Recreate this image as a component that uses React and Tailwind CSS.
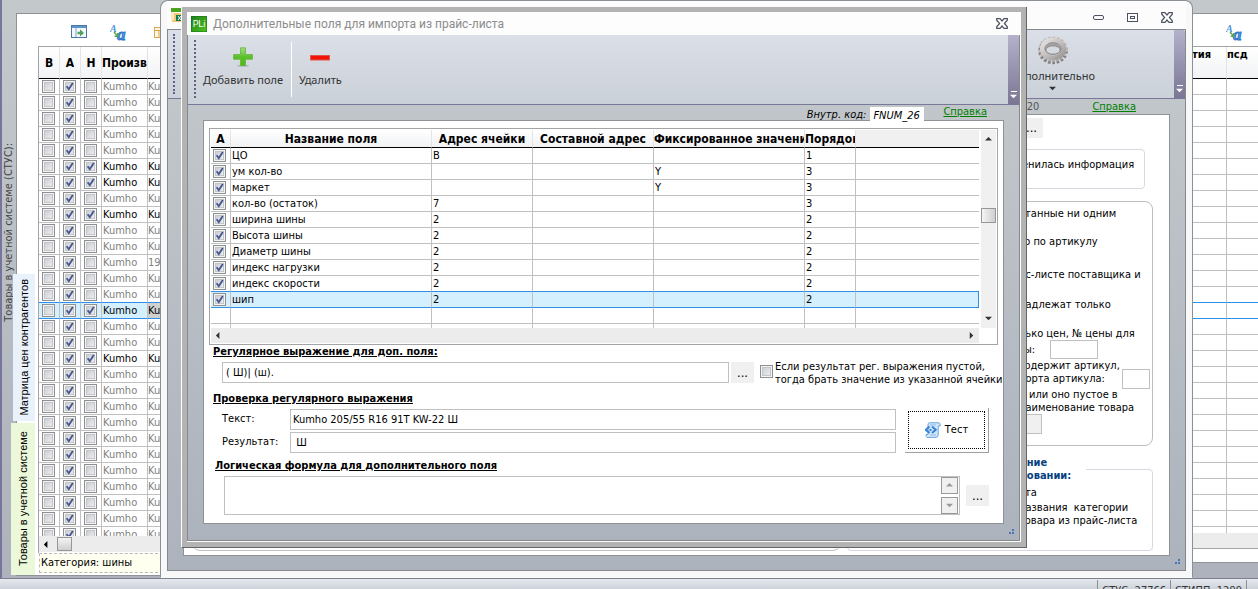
import React, { useState } from "react";
import clsx from "clsx";

const stockRows = Array.from({ length: 29 }, (_, i) => ({
    id: i,
    isNew: [5, 6, 8, 14, 17].includes(i),
    selected: i === 14,
    brand: "Kumho",
    name: i === 11 ? "19" : "Ku",
}));

const fieldRows = [
    { name: "ЦО", cell: "B", fixed: "", order: "1" },
    { name: "ум кол-во", cell: "", fixed: "Y", order: "3" },
    { name: "маркет", cell: "", fixed: "Y", order: "3" },
    { name: "кол-во (остаток)", cell: "7", fixed: "", order: "3" },
    { name: "ширина шины", cell: "2", fixed: "", order: "2" },
    { name: "Высота шины", cell: "2", fixed: "", order: "2" },
    { name: "Диаметр шины", cell: "2", fixed: "", order: "2" },
    { name: "индекс нагрузки", cell: "2", fixed: "", order: "2" },
    { name: "индекс скорости", cell: "2", fixed: "", order: "2" },
    { name: "шип", cell: "2", fixed: "", order: "2" },
];

const Checkbox = ({ id, label, checked = false }) => {
    const [value, setValue] = useState(checked);

    return (
        <span className="relative block size-[13px] shrink-0">
            <input
                id={id}
                type="checkbox"
                aria-label={label}
                checked={value}
                onChange={() => setValue(!value)}
                className="block size-[13px] appearance-none border border-[#8e8f8f] bg-linear-to-br from-[#c4c8d0] to-[#f4f4f4] shadow-[inset_0_0_0_1px_#f4f4f4,inset_0_0_0_2px_#c2c5ca]"
            />
            {value && (
                <svg viewBox="0 0 13 13" className="pointer-events-none absolute inset-0 size-[13px]">
                    <path d="M3.6 6.2 L5.8 9.2 L9.8 3" fill="none" stroke="#44598f" strokeWidth="1.9" />
                </svg>
            )}
        </span>
    );
};

const Triangle = ({ dir, className }) => {
    const points = {
        up: "0,5 8,5 4,1",
        down: "0,2 8,2 4,6",
        left: "5,0 5,8 1,4",
        right: "2,0 2,8 6,4",
    };
    return (
        <svg viewBox="0 0 8 8" className={clsx("size-[7px]", className)} fill="currentColor">
            <polygon points={points[dir]} />
        </svg>
    );
};

const CloseIcon = () => (
    <svg viewBox="0 0 12 11" className="h-[11px] w-3">
        <path
            d="M.7 .7 H4 L6 3 L8 .7 H11.3 V2.2 L8.4 5.5 L11.3 8.8 V10.3 H8 L6 8 L4 10.3 H.7 V8.8 L3.6 5.5 L.7 2.2 Z"
            fill="#fff"
            stroke="#4d5262"
            strokeWidth="1.2"
        />
    </svg>
);

const LettersIcon = () => (
    <svg viewBox="0 0 17 17" className="size-[17px]" fontFamily="Liberation Serif, serif" fontStyle="italic" fontWeight="bold">
        <text x="0" y="8" fontSize="10" fill="#4d93dd">A</text>
        <text x="7" y="16" fontSize="17" fill="#4b95e6" stroke="#2f74cb" strokeWidth=".9">a</text>
        <path d="M4 8 L7.5 12 M7.8 9 V12.3 H4.6" stroke="#5aa552" strokeWidth="1.5" fill="none" />
    </svg>
);

const ExportIcon = () => (
    <svg viewBox="0 0 16 14" className="h-[14px] w-4">
        <rect x=".5" y=".5" width="15" height="12" fill="#f4f8fd" stroke="#4879a8" />
        <rect x="1" y="1" width="14" height="2" fill="#5c93c9" />
        <path d="M5 3 V12" stroke="#7ea4c8" />
        <path d="M6.5 6.8 H9 V4.3 L13 8 L9 11.5 V9.2 H6.5 Z" fill="#4fa35a" />
    </svg>
);

const TableIcon = () => (
    <svg viewBox="0 0 10 11" className="h-[11px] w-[10px]">
        <rect x=".5" y=".5" width="13" height="10" fill="#fff7df" stroke="#dba650" />
        <path d="M1 3.5 H14 M5 3 V11" stroke="#dba650" />
    </svg>
);

const PliIcon = () => (
    <svg viewBox="0 0 16 16" className="size-4">
        <defs>
            <linearGradient id="pli" x1="0" y1="0" x2="1" y2="1">
                <stop offset="0" stopColor="#1c7f1c" />
                <stop offset="1" stopColor="#4fc41c" />
            </linearGradient>
        </defs>
        <rect width="16" height="16" fill="url(#pli)" stroke="#13701a" />
        <text x="8" y="11" fontSize="9" fill="#fff" fontFamily="Roboto, sans-serif" textAnchor="middle">PLi</text>
    </svg>
);

const PriceIcon = () => (
    <svg viewBox="0 0 16 16" className="size-4">
        <rect x="0" y="1" width="14" height="4" fill="#4aa51e" />
        <rect x="1" y="6" width="12" height="9" fill="#f5c878" />
        <rect x="0" y="5" width="3" height="8" fill="#fae8c4" />
        <rect x="5" y="8" width="9" height="6" fill="#17784a" />
        <path d="M7 9 L10 13 M10 9 L7 13" stroke="#fff" />
    </svg>
);

const PlusIcon = () => (
    <svg viewBox="0 0 20 20" className="size-5">
        <defs>
            <linearGradient id="plus" x1="0" y1="0" x2="0" y2="1">
                <stop offset="0" stopColor="#a0dc80" />
                <stop offset=".5" stopColor="#5cc02c" />
                <stop offset="1" stopColor="#4fb80f" />
            </linearGradient>
        </defs>
        <ellipse cx="10" cy="18.8" rx="6" ry="1" fill="#aeb6bd" />
        <path d="M7.5 .8 H12.5 V7.5 H19.4 V12.3 H12.5 V18.6 H7.5 V12.3 H.6 V7.5 H7.5 Z" fill="url(#plus)" stroke="#62b53c" strokeWidth=".8" />
    </svg>
);

const MinusIcon = () => (
    <svg viewBox="0 0 20 20" className="size-5">
        <rect x=".5" y="8.5" width="19" height="4.5" fill="#f01505" stroke="#e0564c" />
    </svg>
);

const GearIcon = () => (
    <svg viewBox="0 0 32 32" className="size-8">
        <defs>
            <linearGradient id="gear" x1="0" y1="0" x2="1" y2="1">
                <stop offset="0" stopColor="#e6e4e4" />
                <stop offset=".5" stopColor="#c4bebe" />
                <stop offset="1" stopColor="#9a9696" />
            </linearGradient>
        </defs>
        <ellipse cx="16" cy="17" rx="13" ry="11.5" fill="none" stroke="#858282" strokeWidth="3.5" strokeDasharray="2.6 1.7" />
        <ellipse cx="16" cy="15" rx="13" ry="11" fill="none" stroke="#bcb8b8" strokeWidth="3" strokeDasharray="2.6 1.7" />
        <ellipse cx="16" cy="15" rx="10.5" ry="9" fill="none" stroke="url(#gear)" strokeWidth="5" />
        <ellipse cx="16" cy="14.5" rx="8" ry="5.8" fill="#a9a5a6" stroke="#8b8787" />
        <ellipse cx="16" cy="16" rx="7.2" ry="4.2" fill="#d5d9e0" stroke="#7c7878" strokeWidth=".8" />
    </svg>
);

const ScriptIcon = () => (
    <svg viewBox="0 0 16 16" className="size-4">
        <path d="M4 .8 H14 Q15.5 1 15.2 4 H13.2 V13 Q13 15.4 11 15.4 H2 Q.8 15 1 12.5 H3 V3 Q3 1 4 .8 Z" fill="#d3e8fa" stroke="#6ba4da" />
        <path d="M5 3 H11 M5 13 H11" stroke="#8dbbe6" />
        <path d="M4.5 4.5 L.8 7.8 L4.5 11 M7 4.5 L10.7 7.8 L7 11" stroke="#3682d6" strokeWidth="2" fill="none" />
        <rect x="4.5" y="7" width="2" height="2" fill="#3682d6" />
    </svg>
);

const ResizeGrip = () => (
    <svg viewBox="0 0 7 7" className="absolute right-1 bottom-1 size-[7px]" fill="#4a76b8">
        <rect x="4" y="0" width="2" height="2" />
        <rect x="1" y="3" width="2" height="2" />
        <rect x="4" y="3" width="2" height="2" />
    </svg>
);

const Grip = ({ className }) => (
    <span className={clsx("w-[2px] border-l-2 border-dotted border-[#5f6285]", className)} />
);

const ToolbarEnd = () => (
    <div className="flex w-[11px] shrink-0 flex-col items-center justify-end rounded-tr-xs bg-linear-to-b from-[#b4b1cb] to-[#7a7694] pb-1 text-white">
        <span className="h-px w-[6px] bg-white" />
        <Triangle dir="down" className="mt-px" />
    </div>
);

const MoreButton = ({ label, className }) => (
    <button aria-label={label} className={clsx("bg-[#f0f0f0] text-center text-[13px] leading-5 text-black", className)}>
        ...
    </button>
);

const StockTable = () => (
    <div className="flex h-[507px] flex-col overflow-hidden border-t border-l border-[#a2a4a8]">
        <div className="h-[489px] overflow-hidden">
            <table className="w-full table-fixed border-separate border-spacing-0 text-left">
                <colgroup>
                    <col className="w-[21px]" />
                    <col className="w-[21px]" />
                    <col className="w-[21px]" />
                    <col className="w-[46px]" />
                    <col />
                </colgroup>
                <thead>
                    <tr className="h-8 bg-linear-to-b from-white to-[#f1f2f4] text-[12px] font-bold">
                        {["В", "А", "Н", "Произв", ""].map((title, i) => (
                            <th
                                key={i}
                                className={clsx("overflow-hidden border-r border-b border-r-[#e3e4e6] border-b-black p-0 whitespace-nowrap", i < 3 && "text-center")}
                            >
                                {title}
                            </th>
                        ))}
                    </tr>
                </thead>
                <tbody>
                    {stockRows.map((row) => (
                        <tr
                            key={row.id}
                            className={clsx(
                                "h-4 leading-[15px]",
                                row.selected ? "bg-[#d4f0ff] *:border-b *:border-b-[#2f8ee8]!" : "*:border-b",
                                row.id === 13 && "*:border-b-[#2f8ee8]!",
                                row.isNew ? "text-black" : "text-[#808080]"
                            )}
                        >
                            <td className="border-r border-[#c0c0c0] p-0 pl-[3px]">
                                <Checkbox label={`В ${row.id}`} />
                            </td>
                            <td className="border-r border-[#c0c0c0] p-0 pl-[3px]">
                                <Checkbox label={`А ${row.id}`} checked />
                            </td>
                            <td className="border-r border-[#c0c0c0] p-0 pl-[3px]">
                                <Checkbox label={`Н ${row.id}`} checked={row.isNew} />
                            </td>
                            <td className="border-r border-[#c0c0c0] p-0 pl-px">{row.brand}</td>
                            <td className={clsx("overflow-hidden border-[#c0c0c0] p-0 whitespace-nowrap", row.selected && "bg-[#d0d0d0]")}>{row.name}</td>
                        </tr>
                    ))}
                </tbody>
            </table>
        </div>
        <div className="flex h-4 items-center bg-[#ececec] pl-1">
            <Triangle dir="left" />
            <span className="ml-[7px] h-[14px] w-[15px] border border-[#979797] bg-linear-to-b from-[#f4f4f4] to-[#cfcfcf]" />
        </div>
    </div>
);

const PriceTable = () => (
    <div className="h-[487px] overflow-hidden border-t border-[#a2a4a8]">
        <table className="w-full table-fixed border-separate border-spacing-0 text-left">
            <thead>
                <tr className="h-8 bg-linear-to-b from-white to-[#f1f2f4] align-top text-[11px] leading-[15px] font-bold">
                    <th className="w-[35px] border-r border-b border-r-[#e3e4e6] border-b-black p-0">тия</th>
                    <th className="border-b border-black p-0">псд</th>
                </tr>
            </thead>
            <tbody>
                {stockRows.map((row) => (
                    <tr key={row.id} className="h-4">
                        <td className={clsx("border-r border-b border-r-[#c0c0c0] p-0", row.id === 13 || row.selected ? "border-b-[#2f8ee8]" : "border-b-[#c0c0c0]")} />
                        <td className={clsx("border-b p-0", row.id === 13 || row.selected ? "border-[#2f8ee8]" : "border-[#c0c0c0]")} />
                    </tr>
                ))}
            </tbody>
        </table>
    </div>
);

const MainScreen = () => (
    <div className="flex min-h-0 flex-1 border-l-2 border-[#77759b] bg-linear-to-b from-[#c3c9cb] to-[#adb2bc] pt-[13px]">
        <div className="flex w-[14px] shrink-0 flex-col items-center pt-[130px]">
            <span className="rotate-180 text-[11px] leading-[14px] whitespace-nowrap text-[#444] [writing-mode:vertical-rl]">
                Товары в учетной системе (СТУС):
            </span>
        </div>
        <div className="mb-[2px] flex min-w-0 flex-1 border-t border-b border-l border-[#8f9296] bg-white">
            <div className="z-10 -ml-1 flex w-[22px] shrink-0 flex-col gap-[2px] pt-[260px] font-['Liberation_Sans',sans-serif] text-[11px]">
                <button className="flex h-[147px] items-center justify-center bg-[#e9f2fa] [writing-mode:vertical-rl]">
                    <span className="rotate-180 whitespace-nowrap">Матрица цен контрагентов</span>
                </button>
                <button className="-ml-[2px] flex h-[153px] items-center justify-center bg-[#ecf8da] [writing-mode:vertical-rl]">
                    <span className="rotate-180 whitespace-nowrap">Товары в учетной системе</span>
                </button>
            </div>
            <div className="ml-[3px] w-[130px] shrink-0">
                <div className="flex h-8 items-center pt-1 pl-[33px]">
                    <ExportIcon />
                    <span className="ml-[23px]">
                        <LettersIcon />
                    </span>
                    <span className="ml-[27px]">
                        <TableIcon />
                    </span>
                </div>
                <StockTable />
                <p className="ml-px border border-dashed border-[#b8b8b8] bg-[#fffff0] pl-px leading-[18px]">Категория: шины</p>
            </div>
            <div className="flex-1" />
            <div className="flex w-[66px] shrink-0 flex-col">
                <div className="flex h-8 shrink-0 items-center pt-1 pl-[34px]">
                    <LettersIcon />
                </div>
                <PriceTable />
                <div className="h-4 border-b border-[#a2a4a8] bg-[#ececec]" />
                <div className="mt-[13px] -mb-px flex-1 border-t border-[#8f9296] bg-[#adb2bc]" />
            </div>
        </div>
    </div>
);

const OptionsColumn = () => (
    <div className="w-[306px] shrink-0 whitespace-nowrap">
        <MoreButton label="Выбрать файл" className="mt-[3px] ml-[173px] block h-5 w-[23px]" />
        <div className="mt-[11px] mr-2 h-10 rounded-sm border border-[#d5dae0] pt-[7px] pl-[174px]">енилась информация</div>
        <div className="mt-3 h-[245px] rounded-lg border border-[#bdbdbd] pt-[5px] pl-[171px] leading-[13px]">
            <p>етанные ни одним</p>
            <p className="mt-[15px]">го по артикулу</p>
            <p className="mt-5">йс-листе поставщика и</p>
            <p className="mt-[17px]">надлежат только</p>
            <p className="mt-4">лько цен, № цены для</p>
            <div className="flex items-center">
                <label htmlFor="price-no" className="w-[31px] pl-[5px]">ы:</label>
                <input id="price-no" className="h-[19px] w-12 border border-[#c0c0c0] bg-white" />
            </div>
            <div className="flex items-end">
                <label htmlFor="article-no" className="w-[103px]">
                    содержит артикул,
                    <br />
                    порта артикула:
                </label>
                <input id="article-no" aria-label="Артикул" className="-mb-1 h-5 w-7 border border-[#c0c0c0] bg-white" />
            </div>
            <p className="mt-[3px] pl-[10px]">или оно пустое в</p>
            <p>наименование товара</p>
            <input aria-label="Наименование" disabled className="block h-5 w-[23px] border border-[#c0c0c0] bg-[#f0f0f0]" />
        </div>
        <fieldset className="mt-[10px] h-[95px] rounded-sm border border-[#d5dae0] leading-[13px]">
            <legend className="w-[238px] bg-white pl-[172px] text-[11px] font-bold text-[#063f82]">
                ение
                <br />
                новании:
            </legend>
            <div className="pt-1 pl-[171px]">
                <p className="pl-[6px]">та</p>
                <p className="mt-[2px] whitespace-pre">названия  категории</p>
                <p>товара из прайс-листа</p>
            </div>
        </fieldset>
    </div>
);

const ImportWindow = () => (
    <section className="absolute top-0 right-[65px] bottom-[11px] left-40 flex flex-col rounded-t-lg border border-[#8b8f96] border-b-[#fafafa] bg-[#f8f8f8] px-[6px] pb-[6px]">
        <header className="flex h-7 shrink-0 items-center bg-[#fcfcfc] pl-1">
            <PriceIcon />
            <div className="ml-auto flex items-center gap-[23px] pt-1 pr-[13px]">
                <button aria-label="Свернуть" className="h-[5px] w-[11px] rounded-xs border border-[#4d5262]" />
                <button aria-label="Развернуть" className="flex h-[9px] w-[11px] items-center justify-center border border-[#4d5262]">
                    <span className="h-[3px] w-[5px] border border-[#4d5262]" />
                </button>
                <button aria-label="Закрыть окно">
                    <CloseIcon />
                </button>
            </div>
        </header>
        <div className="relative flex min-h-0 flex-1 flex-col border border-[#85888c] bg-linear-to-b from-[#c3c9cb] to-[#adb3bd]">
            <div className="flex h-[69px] shrink-0 border-b border-[#7a7898] bg-linear-to-b from-[#dbdfe7] to-[#cbd1d8]">
                <Grip className="my-1 ml-[5px]" />
                <button className="mr-[79px] ml-auto flex flex-col items-center font-['Noto_Sans'] text-[11px] leading-4 text-[#333]">
                    <span className="mt-1">
                        <GearIcon />
                    </span>
                    <span className="mt-[2px]">Дополнительно</span>
                    <Triangle dir="down" className="mt-px" />
                </button>
                <ToolbarEnd />
            </div>
            <div className="flex h-[15px] shrink-0 justify-end pr-[49px] leading-4">
                <span className="mr-[53px] text-[#555]">20</span>
                <a href="#help" className="text-[#008000] underline">Справка</a>
            </div>
            <div className="mx-[15px] mb-[14px] flex min-h-0 flex-1 gap-[6px] border border-[#8f9296] bg-white pr-4 pl-2">
                <div className="mb-1 flex-1 rounded-lg border border-[#c0c0c0]" />
                <OptionsColumn />
            </div>
            <ResizeGrip />
        </div>
    </section>
);

const FieldsTable = () => {
    const [current, setCurrent] = useState(9);
    const heads = ["А", "Название поля", "Адрес ячейки", "Составной адрес", "Фиксированное значени", "Порядок"];

    return (
        <div className="mx-[5px] mt-[7px] grid grid-cols-[1fr_17px] border border-[#a2a4a8] p-px">
            <div className="h-[198px] overflow-hidden">
                <table className="w-full table-fixed border-separate border-spacing-0 text-left">
                    <colgroup>
                        <col className="w-5" />
                        <col className="w-[201px]" />
                        <col className="w-[101px]" />
                        <col className="w-[121px]" />
                        <col className="w-[151px]" />
                        <col className="w-[51px]" />
                        <col />
                    </colgroup>
                    <thead>
                        <tr className="h-[18px] text-[12px] leading-4 font-bold">
                            {heads.map((head, i) => (
                                <th
                                    key={head}
                                    className={clsx(
                                        "overflow-hidden border-r border-b border-r-[#e3e4e6] border-b-black bg-linear-to-b from-white to-[#f1f2f4] p-0 whitespace-nowrap",
                                        i < 4 && "text-center"
                                    )}
                                >
                                    {head}
                                </th>
                            ))}
                            <th className="border-b border-black bg-[#f0f0f0] p-0" />
                        </tr>
                    </thead>
                    <tbody>
                        {fieldRows.map((row, i) => (
                            <tr
                                key={row.name}
                                onClick={() => setCurrent(i)}
                                className={clsx(
                                    "h-4 leading-[15px] *:border-r *:border-b *:border-r-[#c0c0c0] *:p-0 *:pl-px",
                                    i === current
                                        ? "bg-[#d4f0ff] *:border-b-[#2f8ee8] *:last:border-r-[#2f8ee8]"
                                        : "*:border-b-[#c0c0c0] *:last:border-r-0",
                                    i === current - 1 && "*:border-b-[#2f8ee8]!"
                                )}
                            >
                                <td>
                                    <div className="pl-px">
                                        <Checkbox label={row.name} checked />
                                    </div>
                                </td>
                                <td>{row.name}</td>
                                <td>{row.cell}</td>
                                <td />
                                <td>{row.fixed}</td>
                                <td>{row.order}</td>
                                <td />
                            </tr>
                        ))}
                        {[0, 1].map((n) => (
                            <tr key={n} className="h-4 *:border-r *:border-b *:border-[#c0c0c0] *:p-0 *:last:border-r-0">
                                {[0, 1, 2, 3, 4, 5, 6].map((c) => (
                                    <td key={c} />
                                ))}
                            </tr>
                        ))}
                    </tbody>
                </table>
            </div>
            <div className="ml-[2px] flex flex-col items-center bg-[#f0f0f0] py-[6px] text-[#333]">
                <Triangle dir="up" />
                <span className="mt-[65px] h-[15px] w-[15px] border border-[#979797] bg-linear-to-r from-[#f4f4f4] to-[#cfcfcf]" />
                <Triangle dir="down" className="mt-auto" />
            </div>
            <div className="flex h-[15px] items-center justify-between bg-[#ececec] px-1 text-[#333]">
                <Triangle dir="left" />
                <Triangle dir="right" />
            </div>
        </div>
    );
};

const SectionTitle = ({ children, className }) => (
    <h2 className={clsx("text-[11px] leading-[14px] font-bold underline", className)}>{children}</h2>
);

const FieldsDialog = () => {
    const [sample, setSample] = useState("Kumho 205/55 R16 91T KW-22 Ш");

    return (
        <section className="absolute top-[7px] right-[231px] left-[181px] border border-t-0 border-l-white border-r-[#666] border-b-[#666]">
            <div className="border-[5px] border-[#b3b3b3] bg-white">
                <header className="flex h-[23px] items-center bg-[#fdfdfd] pr-[13px] pl-1">
                    <PliIcon />
                    <h1 className="ml-[6px] font-['Roboto'] text-[12px] text-[#8c8c8c]">Дополнительные поля для импорта из прайс-листа</h1>
                    <button aria-label="Закрыть" className="ml-auto">
                        <CloseIcon />
                    </button>
                </header>
                <div className="relative mr-px mb-px border-x border-b border-[#85888c] bg-linear-to-b from-[#c3c9cb] to-[#adb3bd] pb-4">
                    <div className="flex h-[70px] border-b border-[#7a7898] bg-linear-to-b from-[#dbdfe7] to-[#cbd1d8] font-['Noto_Sans'] text-[11px] leading-4 text-[#333]">
                        <Grip className="mt-[5px] mb-[6px] ml-[6px]" />
                        <button className="ml-[7px] flex flex-col items-center pt-3">
                            <PlusIcon />
                            <span className="mt-[5px]">Добавить поле</span>
                        </button>
                        <span className="my-[7px] ml-2 w-px bg-white" />
                        <button className="ml-[7px] flex flex-col items-center pt-3">
                            <MinusIcon />
                            <span className="mt-[5px]">Удалить</span>
                        </button>
                        <span className="flex-1" />
                        <ToolbarEnd />
                    </div>
                    <div className="flex h-[15px] justify-end pr-8 leading-[14px]">
                        <label htmlFor="inner-code" className="pt-[3px] pr-1 italic">Внутр. код:</label>
                        <input
                            id="inner-code"
                            defaultValue="FNUM_26"
                            className="z-10 mt-[2px] mr-[19px] h-[17px] w-[54px] bg-white px-[3px] italic"
                        />
                        <a href="#help" className="text-[#008000] underline">Справка</a>
                    </div>
                    <main className="mx-[15px] border border-[#8f9296] bg-white pb-2">
                        <FieldsTable />
                        <SectionTitle className="ml-[9px]">Регулярное выражение для доп. поля:</SectionTitle>
                        <div className="mt-[3px] mr-1 ml-[18px] flex">
                            <input
                                aria-label="Регулярное выражение"
                                defaultValue="( Ш)| (ш)."
                                className="h-[21px] min-w-0 flex-1 border border-[#c0c0c0] bg-white px-[3px]"
                            />
                            <MoreButton label="Редактор выражения" className="ml-[2px] h-[21px] w-[23px]" />
                            <div className="mt-[3px] ml-[6px]">
                                <Checkbox id="empty-result" />
                            </div>
                            <label htmlFor="empty-result" className="-mt-[2px] ml-[2px] w-[224px] leading-[13px] whitespace-nowrap">
                                Если результат рег. выражения пустой,
                                <br />
                                тогда брать значение из указанной ячейки
                            </label>
                        </div>
                        <SectionTitle className="mt-[6px] ml-[9px]">Проверка регулярного выражения</SectionTitle>
                        <div className="mt-[2px] mr-[14px] ml-[18px] flex">
                            <div className="grid flex-1 grid-cols-[68px_1fr] items-center gap-y-[2px] pt-px">
                                <label htmlFor="sample">Текст:</label>
                                <input
                                    id="sample"
                                    value={sample}
                                    onChange={(e) => setSample(e.target.value)}
                                    className="h-[21px] border border-[#c0c0c0] bg-white px-[2px]"
                                />
                                <label htmlFor="result">Результат:</label>
                                <input id="result" readOnly value=" Ш" className="h-[21px] border border-[#c0c0c0] bg-white px-[2px]" />
                            </div>
                            <button className="ml-[9px] h-[45px] w-[84px] border-r border-b border-[#a0a0a0] p-[3px]">
                                <span className="flex h-full items-center justify-center gap-1 border border-dotted border-black">
                                    <ScriptIcon />
                                    Тест
                                </span>
                            </button>
                        </div>
                        <SectionTitle className="mt-[6px] ml-[11px]">Логическая формула для дополнительного поля</SectionTitle>
                        <div className="mt-[3px] mr-[14px] ml-5 flex">
                            <div className="flex flex-1 border border-[#c0c0c0] pr-px">
                                <textarea aria-label="Логическая формула" className="block h-[37px] min-w-0 flex-1 resize-none overflow-hidden" />
                                <div className="flex w-[17px] flex-col justify-between text-[#999]">
                                    <button aria-label="Вверх" className="flex h-[17px] items-center justify-center border border-[#999] bg-[#f0f0f0]">
                                        <Triangle dir="up" />
                                    </button>
                                    <button aria-label="Вниз" className="flex h-[17px] items-center justify-center border border-[#999] bg-[#f0f0f0]">
                                        <Triangle dir="down" />
                                    </button>
                                </div>
                            </div>
                            <MoreButton label="Редактор формулы" className="mt-[9px] ml-[6px] h-[21px] w-[23px]" />
                        </div>
                    </main>
                    <ResizeGrip />
                </div>
            </div>
        </section>
    );
};

const StatusBar = () => (
    <footer className="flex h-[11px] shrink-0 justify-end overflow-hidden border-t border-[#7c8090] bg-linear-to-b from-[#e6e9ee] to-[#cdd2da] text-[#333]">
        <span className="mt-px border-l border-[#8b8f96] px-1 pt-1 leading-[14px] whitespace-pre">СТУС: 27766</span>
        <span className="mt-px border-x border-[#8b8f96] px-1 pt-1 leading-[14px]">СТИПП: 1299</span>
        <span className="w-[11px]" />
    </footer>
);

const App = () => (
    <div className="relative flex h-screen flex-col overflow-hidden bg-white font-['DejaVu_Sans_Condensed','DejaVu_Sans',sans-serif] text-[11px] text-black">
        <MainScreen />
        <StatusBar />
        <ImportWindow />
        <FieldsDialog />
    </div>
);

export default App;
